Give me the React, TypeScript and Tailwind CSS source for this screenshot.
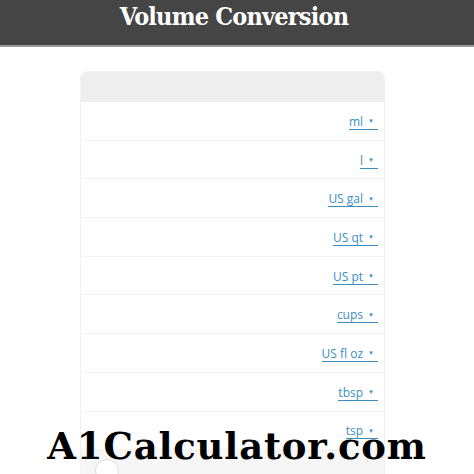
import React from "react";

const units = ["ml", "l", "US gal", "US qt", "US pt", "cups", "US fl oz", "tbsp", "tsp"];

export default function App() {
  return (
    <div className="relative w-[474px] h-[474px] overflow-hidden bg-white">
      <div className="h-[47px] bg-[#454545] border-b-2 border-[#9a9a9a] flex items-start justify-center">
        <h1
          className="text-white text-[25px] font-bold leading-none mt-[4px] mr-[6px] font-stretch-condensed tracking-[-0.8px]"
          style={{ fontFamily: '"DejaVu Serif", serif' }}
        >
          Volume Conversion
        </h1>
      </div>
      <div className="mt-[24px] w-[305px] ml-[80px] rounded-t-[7px] border border-[#f1f1f1] overflow-hidden">
        <div className="h-[30px] bg-[#eeeeee]" />
        {units.map((u) => (
          <div key={u} className="h-[38.7px] border-b border-[#f3f3f3] flex items-center justify-end pr-[6px]">
            <span
              className="inline-flex items-center text-[12px] leading-[15px] text-[#3a8fbf] border-b border-[#3a8fbf] mt-[2px]"
              style={{ fontFamily: '"Open Sans", sans-serif' }}
            >
              <span>{u}</span>
              <span className="text-[6px] leading-none ml-[5px] mr-[4px]">▼</span>
            </span>
          </div>
        ))}
        <div className="h-[30px] bg-[#f6f6f6] relative">
          <div className="absolute left-[14px] top-[9px] w-[24px] h-[24px] rounded-full border border-[#dddddd] bg-white" />
        </div>
      </div>
      <div
        className="absolute left-0 right-0 top-[428px] text-center text-black font-bold text-[37px] leading-none tracking-[0.8px]"
        style={{ fontFamily: '"DejaVu Serif", serif' }}
      >
        A1Calculator.com
      </div>
    </div>
  );
}
